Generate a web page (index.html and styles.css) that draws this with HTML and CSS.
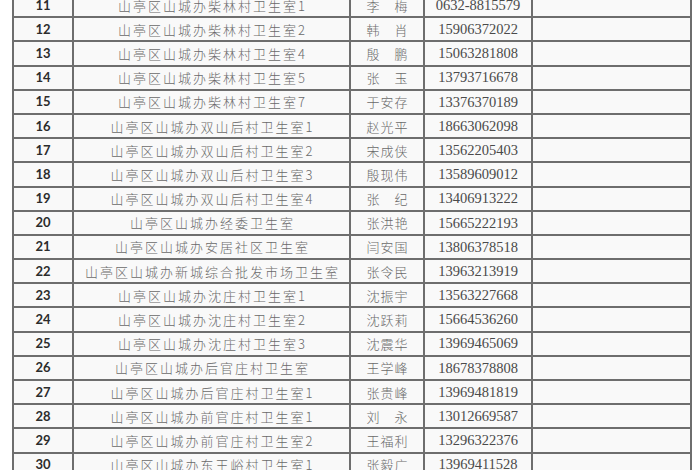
FILE: index.html
```html
<!DOCTYPE html>
<html lang="zh-CN">
<head>
<meta charset="utf-8">
<title>卫生室名单</title>
<link rel="stylesheet" href="styles.css">
</head>
<body>
<table class="roster">
  <colgroup>
    <col class="c-no"><col class="c-unit"><col class="c-name"><col class="c-tel"><col class="c-note">
  </colgroup>
  <tbody>
    <tr><td class="no">11</td><td class="unit">山亭区山城办柴林村卫生室1</td><td class="person">李　梅</td><td class="tel">0632-8815579</td><td></td></tr>
    <tr><td class="no">12</td><td class="unit">山亭区山城办柴林村卫生室2</td><td class="person">韩　肖</td><td class="tel">15906372022</td><td></td></tr>
    <tr><td class="no">13</td><td class="unit">山亭区山城办柴林村卫生室4</td><td class="person">殷　鹏</td><td class="tel">15063281808</td><td></td></tr>
    <tr><td class="no">14</td><td class="unit">山亭区山城办柴林村卫生室5</td><td class="person">张　玉</td><td class="tel">13793716678</td><td></td></tr>
    <tr><td class="no">15</td><td class="unit">山亭区山城办柴林村卫生室7</td><td class="person">于安存</td><td class="tel">13376370189</td><td></td></tr>
    <tr><td class="no">16</td><td class="unit">山亭区山城办双山后村卫生室1</td><td class="person">赵光平</td><td class="tel">18663062098</td><td></td></tr>
    <tr><td class="no">17</td><td class="unit">山亭区山城办双山后村卫生室2</td><td class="person">宋成侠</td><td class="tel">13562205403</td><td></td></tr>
    <tr><td class="no">18</td><td class="unit">山亭区山城办双山后村卫生室3</td><td class="person">殷现伟</td><td class="tel">13589609012</td><td></td></tr>
    <tr><td class="no">19</td><td class="unit">山亭区山城办双山后村卫生室4</td><td class="person">张　纪</td><td class="tel">13406913222</td><td></td></tr>
    <tr><td class="no">20</td><td class="unit">山亭区山城办经委卫生室</td><td class="person">张洪艳</td><td class="tel">15665222193</td><td></td></tr>
    <tr><td class="no">21</td><td class="unit">山亭区山城办安居社区卫生室</td><td class="person">闫安国</td><td class="tel">13806378518</td><td></td></tr>
    <tr><td class="no">22</td><td class="unit">山亭区山城办新城综合批发市场卫生室</td><td class="person">张令民</td><td class="tel">13963213919</td><td></td></tr>
    <tr><td class="no">23</td><td class="unit">山亭区山城办沈庄村卫生室1</td><td class="person">沈振宇</td><td class="tel">13563227668</td><td></td></tr>
    <tr><td class="no">24</td><td class="unit">山亭区山城办沈庄村卫生室2</td><td class="person">沈跃莉</td><td class="tel">15664536260</td><td></td></tr>
    <tr><td class="no">25</td><td class="unit">山亭区山城办沈庄村卫生室3</td><td class="person">沈震华</td><td class="tel">13969465069</td><td></td></tr>
    <tr><td class="no">26</td><td class="unit">山亭区山城办后官庄村卫生室</td><td class="person">王学峰</td><td class="tel">18678378808</td><td></td></tr>
    <tr><td class="no">27</td><td class="unit">山亭区山城办后官庄村卫生室1</td><td class="person">张贵峰</td><td class="tel">13969481819</td><td></td></tr>
    <tr><td class="no">28</td><td class="unit">山亭区山城办前官庄村卫生室1</td><td class="person">刘　永</td><td class="tel">13012669587</td><td></td></tr>
    <tr><td class="no">29</td><td class="unit">山亭区山城办前官庄村卫生室2</td><td class="person">王福利</td><td class="tel">13296322376</td><td></td></tr>
    <tr><td class="no">30</td><td class="unit">山亭区山城办东王峪村卫生室1</td><td class="person">张毅广</td><td class="tel">13969411528</td><td></td></tr>
  </tbody>
</table>
</body>
</html>
```
FILE: styles.css
```css
html, body {
  margin: 0;
  padding: 0;
  background: #ffffff;
  overflow: hidden;
}
body {
  width: 700px;
  height: 470px;
}
.roster {
  border-collapse: collapse;
  table-layout: fixed;
  width: 678px;
  margin: -8px 0 0 12px;
  background: #f9f9f9;
}
.c-no { width: 60px; }
.c-unit { width: 277px; }
.c-name { width: 74px; }
.c-tel { width: 108px; }
.c-note { width: 159px; }
.roster td {
  border: 2px solid #6e6e6e;
  height: 24.2px;
  padding: 0;
  text-align: center;
  vertical-align: middle;
  white-space: nowrap;
  box-sizing: border-box;
  line-height: 1;
}
.no {
  font-family: Lato, "Liberation Sans", sans-serif;
  font-weight: 700;
  font-size: 13px;
  color: #2c2c2c;
}
.unit {
  font-family: "Noto Sans CJK SC", "Liberation Serif", serif;
  font-weight: 300;
  font-size: 13px;
  letter-spacing: 2px;
  text-indent: 2px;
  color: #6a6a6a;
}
.person {
  font-family: "Noto Sans CJK SC", sans-serif;
  font-weight: 300;
  font-size: 13px;
  letter-spacing: 1px;
  text-indent: 1px;
  color: #6a6a6a;
}
.tel {
  font-family: "Liberation Serif", serif;
  font-size: 14.5px;
  color: #4a4a4a;
}
```
